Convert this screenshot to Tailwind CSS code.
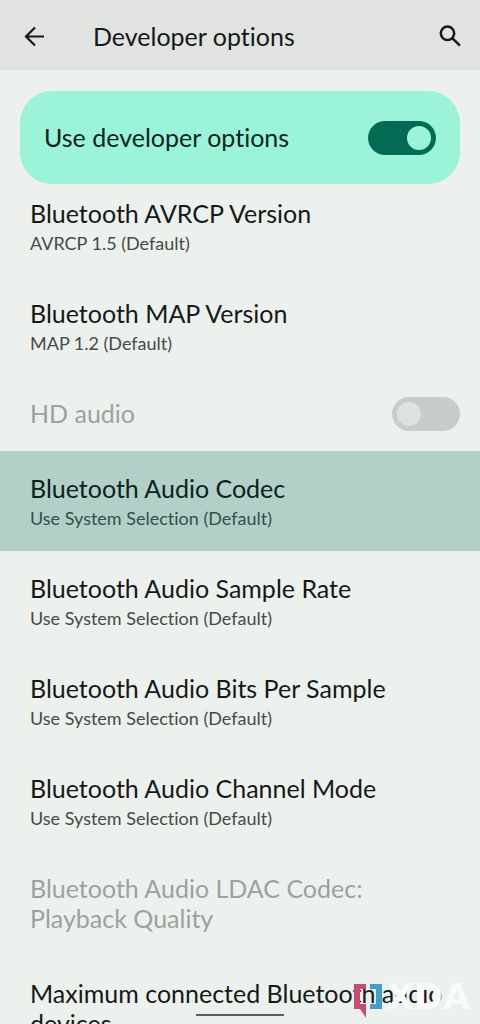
<!DOCTYPE html>
<html lang="en">
<head>
<meta charset="utf-8">
<meta name="viewport" content="width=device-width, initial-scale=1">
<title>Developer options</title>
<script src="https://cdn.jsdelivr.net/npm/@tailwindcss/browser@4"></script>
</head>
<body class="relative flex h-screen flex-col overflow-hidden bg-[#ecf1ee] font-['Lato','Roboto',sans-serif] text-[25px] leading-[30px] text-[#151918] [font-variant-ligatures:none]">
  <header class="flex h-[70px] shrink-0 items-center bg-[#e1e3e1] px-5 pt-[2px]">
    <button type="button" aria-label="Back" class="size-7">
      <svg viewBox="0 0 28 28" class="size-7" fill="none" stroke="currentColor" stroke-width="2.2"><path d="M24 14.5H6.5M15 5.5l-9 9 9 9"/></svg>
    </button>
    <h1 class="ml-[45px] grow">Developer options</h1>
    <button type="button" aria-label="Search" class="-mr-1 size-7">
      <svg viewBox="0 0 28 28" class="size-7" fill="none" stroke="currentColor" stroke-width="2.5"><circle cx="11.5" cy="11.3" r="6.7"/><path d="M16.3 16.1l7.6 7.6"/></svg>
    </button>
  </header>

  <main class="min-h-0 grow overflow-hidden">
    <label class="mx-5 mt-[21px] flex h-[93px] items-center justify-between rounded-[32px] bg-[#9bf4d9] px-6 text-[#0b241c]">
      <span class="pb-[2px]">Use developer options</span>
      <span class="relative flex">
        <input type="checkbox" role="switch" checked class="peer h-[34px] w-[68px] appearance-none rounded-full bg-[#c9cdca] checked:bg-[#036b54]">
        <span class="pointer-events-none absolute left-[5px] top-[5px] size-6 rounded-full bg-[#dce3df] peer-checked:left-[39px] peer-checked:bg-[#9bf4d9]"></span>
      </span>
    </label>

    <a href="#avrcp" class="block px-[30px] pb-[18px] pt-[14px]">
      <span class="block">Bluetooth AVRCP Version</span>
      <span class="block text-lg/[30px] text-[#454b48]">AVRCP 1.5 (Default)</span>
    </a>
    <a href="#map" class="block px-[30px] pb-[18px] pt-[22px]">
      <span class="block">Bluetooth MAP Version</span>
      <span class="block text-lg/[30px] text-[#454b48]">MAP 1.2 (Default)</span>
    </a>
    <label class="flex h-[75px] items-center justify-between pl-[30px] pr-5 text-[#9da19f]">
      <span class="pb-[2px]">HD audio</span>
      <span class="relative flex">
        <input type="checkbox" role="switch" disabled class="peer h-[34px] w-[68px] appearance-none rounded-full bg-[#c9cdca]">
        <span class="pointer-events-none absolute left-[5px] top-[5px] size-6 rounded-full bg-[#dce3df]"></span>
      </span>
    </label>
    <a href="#codec" class="block bg-[#b2cfc8] px-[30px] pb-[18px] pt-[22px] text-[#0d211d]">
      <span class="block">Bluetooth Audio Codec</span>
      <span class="block text-lg/[30px] text-[#35504a]">Use System Selection (Default)</span>
    </a>
    <a href="#sample-rate" class="block px-[30px] pb-[18px] pt-[22px]">
      <span class="block">Bluetooth Audio Sample Rate</span>
      <span class="block text-lg/[30px] text-[#454b48]">Use System Selection (Default)</span>
    </a>
    <a href="#bits" class="block px-[30px] pb-[18px] pt-[22px]">
      <span class="block">Bluetooth Audio Bits Per Sample</span>
      <span class="block text-lg/[30px] text-[#454b48]">Use System Selection (Default)</span>
    </a>
    <a href="#channel" class="block px-[30px] pb-[18px] pt-[22px]">
      <span class="block">Bluetooth Audio Channel Mode</span>
      <span class="block text-lg/[30px] text-[#454b48]">Use System Selection (Default)</span>
    </a>
    <div class="px-[30px] pb-[23px] pt-[22px] text-[#9da19f]">Bluetooth Audio LDAC Codec:<br>Playback Quality</div>
    <a href="#max-devices" class="block px-[30px] pt-[22px]">Maximum connected Bluetooth audio<br>devices</a>
  </main>

  <!-- Gesture bar -->
  <div class="absolute bottom-2 left-1/2 h-[2px] w-[88px] -translate-x-1/2 bg-[#5b5f5d]"></div>

  <!-- Watermark -->
  <div class="pointer-events-none absolute bottom-1 right-[10px] flex items-start gap-1">
    <svg viewBox="0 0 30 36" class="h-9 w-[30px]">
      <path fill="#c94a74" d="M1 0h12v5H7v15h6v14l-6-9H1z"/>
      <path fill="#439fca" d="M17 0h12v25H17v-5h6V5h-6z"/>
    </svg>
    <span class="font-['DejaVu_Sans',sans-serif] text-[35px] font-bold leading-[26px] text-[#f9fbfa]">XDA</span>
  </div>
</body>
</html>
